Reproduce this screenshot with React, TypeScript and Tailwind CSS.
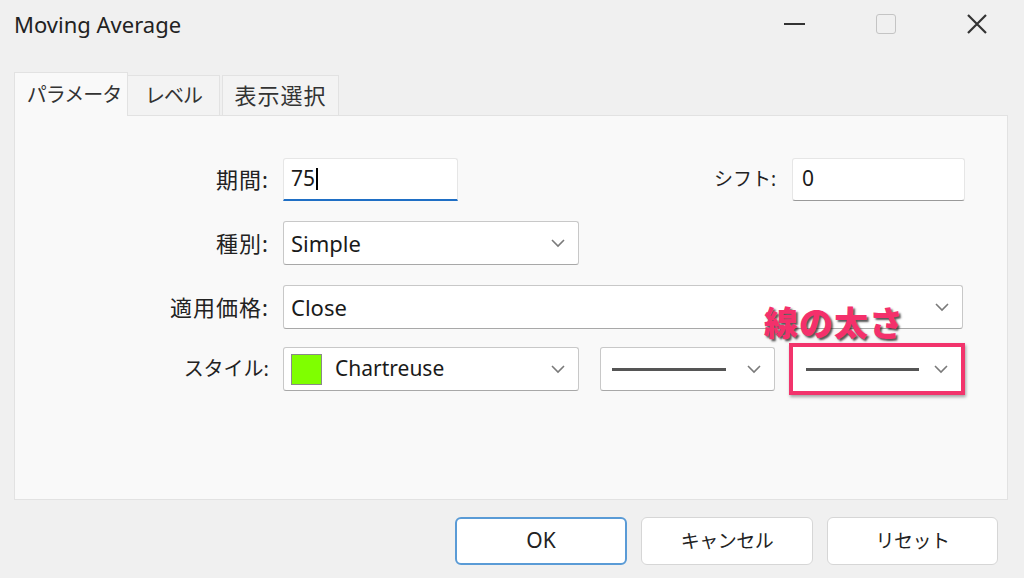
import React from "react";

const font = { fontFamily: '"Noto Sans", "Noto Sans CJK JP", sans-serif' };

const Chevron = () => (
  <svg width="16" height="10" viewBox="0 0 16 10" className="shrink-0">
    <polyline points="2,2 8,8 14,2" fill="none" stroke="#7a7a7a" strokeWidth="1.6" />
  </svg>
);

type SelectProps = {
  w: string;
  children?: React.ReactNode;
  className?: string;
};

const Select = ({ w, children, className }: SelectProps) => (
  <div
    className={`${w} h-[44px] bg-white border border-[#c8c8c8] border-b-[#a8a8a8] rounded-[3px] flex items-center pl-[7px] pr-[12px] gap-2 ${className ?? ""}`}
  >
    <div className="flex-1 flex items-center min-w-0">{children}</div>
    <Chevron />
  </div>
);

const Label = ({ text, cls = "text-[22px] tracking-[1px]" }: { text: string; cls?: string }) => (
  <div className={`w-[268px] text-right text-[#222] pr-[14px] shrink-0 ${cls}`}>{text}</div>
);

const App = () => {
  return (
    <div className="w-[1024px] h-[578px] bg-[#f0f0f0] relative overflow-hidden text-[#1a1a1a]" style={font}>
      {/* title bar */}
      <div className="h-[48px] flex items-center pl-[14px]">
        <div className="text-[22px] text-[#222] flex-1">Moving Average</div>
        <div className="flex items-center h-full pr-[2px]">
          <div className="w-[91px] flex justify-center">
            <div className="w-[21px] h-[2px] bg-[#333]" />
          </div>
          <div className="w-[91px] flex justify-center">
            <div className="w-[20px] h-[20px] border-[1.5px] border-[#c4c4c4] rounded-[3px]" />
          </div>
          <div className="w-[91px] flex justify-center">
            <svg width="22" height="22" viewBox="0 0 22 22">
              <path d="M2 2 L20 20 M20 2 L2 20" stroke="#333" strokeWidth="2.2" />
            </svg>
          </div>
        </div>
      </div>

      {/* tabs */}
      <div className="flex items-end pl-[14px] mt-[24px] h-[43px]">
        <div className="h-[44px] w-[114px] bg-[#f9f9f9] border border-b-0 border-[#e2e2e2] flex items-center justify-center pl-[6px] text-[20px] tracking-[-1px] text-[#333] relative z-10 -mb-px">
          パラメータ
        </div>
        <div className="h-[40px] w-[92px] bg-[#f3f3f3] border border-b-0 border-l-0 border-[#e2e2e2] flex items-center justify-center text-[20px] tracking-[-1px] text-[#333]">
          レベル
        </div>
        <div className="h-[40px] w-[117px] bg-[#f3f3f3] border border-b-0 border-[#e2e2e2] ml-[2px] flex items-center justify-center text-[22px] tracking-[1px] text-[#333]">
          表示選択
        </div>
      </div>

      {/* panel */}
      <div className="mx-[14px] mr-[16px] h-[385px] bg-[#f9f9f9] border border-[#e2e2e2] pt-[41px] flex flex-col">
        <div className="flex items-center h-[44px]">
          <Label text="期間:" />
          <div className="w-[175px] h-[43px] bg-white border border-[#e6e6e6] border-b-[2px] border-b-[#1f6fc5] rounded-t-[3px] flex items-center pl-[7px] text-[21px]">
            75<span className="w-[1.5px] h-[22px] bg-black ml-px" />
          </div>
          <div className="flex-1" />
          <div className="text-[19px] text-[#222] pr-[16px]">シフト:</div>
          <div className="w-[173px] h-[43px] bg-white border border-[#e6e6e6] border-b-[#9a9a9a] rounded-[3px] flex items-center pl-[9px] text-[21px] mr-[42px]">
            0
          </div>
        </div>

        <div className="flex items-center h-[44px] mt-[20px]">
          <Label text="種別:" />
          <Select w="w-[296px]">
            <span className="text-[22px]">Simple</span>
          </Select>
        </div>

        <div className="flex items-center h-[44px] mt-[20px]">
          <Label text="適用価格:" />
          <Select w="w-[680px]">
            <span className="text-[22px]">Close</span>
          </Select>
        </div>

        <div className="flex items-center h-[44px] mt-[18px]">
          <Label text="スタイル:" cls="text-[20px]" />
          <Select w="w-[296px]" className="border-[#a8a8a8]">
            <div className="w-[31px] h-[31px] bg-[#7fff00] border border-[#8a8a8a] shrink-0" />
            <span className="text-[21px] ml-[13px]">Chartreuse</span>
          </Select>
          <Select w="w-[175px] ml-[21px]" className="border-[#a8a8a8]">
            <div className="w-[114px] h-[3px] bg-[#555] ml-[4px]" />
          </Select>
          <div className="ml-[14px] border-[4px] border-[#f2346c] shadow-[1px_2px_3px_rgba(0,0,0,0.35)]">
            <Select w="w-[168px]" className="border-0 rounded-none h-[40px]">
              <div className="w-[113px] h-[3px] bg-[#555] ml-[6px]" />
            </Select>
          </div>
        </div>
      </div>

      {/* annotation */}
      <div
        className="absolute left-[764px] top-[298px] text-[34px] font-black text-[#f4306b] tracking-[1px]"
        style={{ textShadow: "2px 2px 2px rgba(30,30,30,0.75)" }}
      >
        線の太さ
      </div>

      {/* buttons */}
      <div className="flex justify-end gap-[14px] pr-[26px] mt-[17px]">
        <button className="w-[172px] h-[48px] bg-white border-2 border-[#5a9bd6] rounded-[6px] text-[21px] text-[#222]">
          OK
        </button>
        <button className="w-[172px] h-[48px] bg-white border border-[#d6d6d6] rounded-[6px] text-[19px] tracking-[-0.5px] text-[#222]">
          キャンセル
        </button>
        <button className="w-[171px] h-[48px] bg-white border border-[#d6d6d6] rounded-[6px] text-[19px] tracking-[-0.5px] text-[#222]">
          リセット
        </button>
      </div>
    </div>
  );
};

export default App;
